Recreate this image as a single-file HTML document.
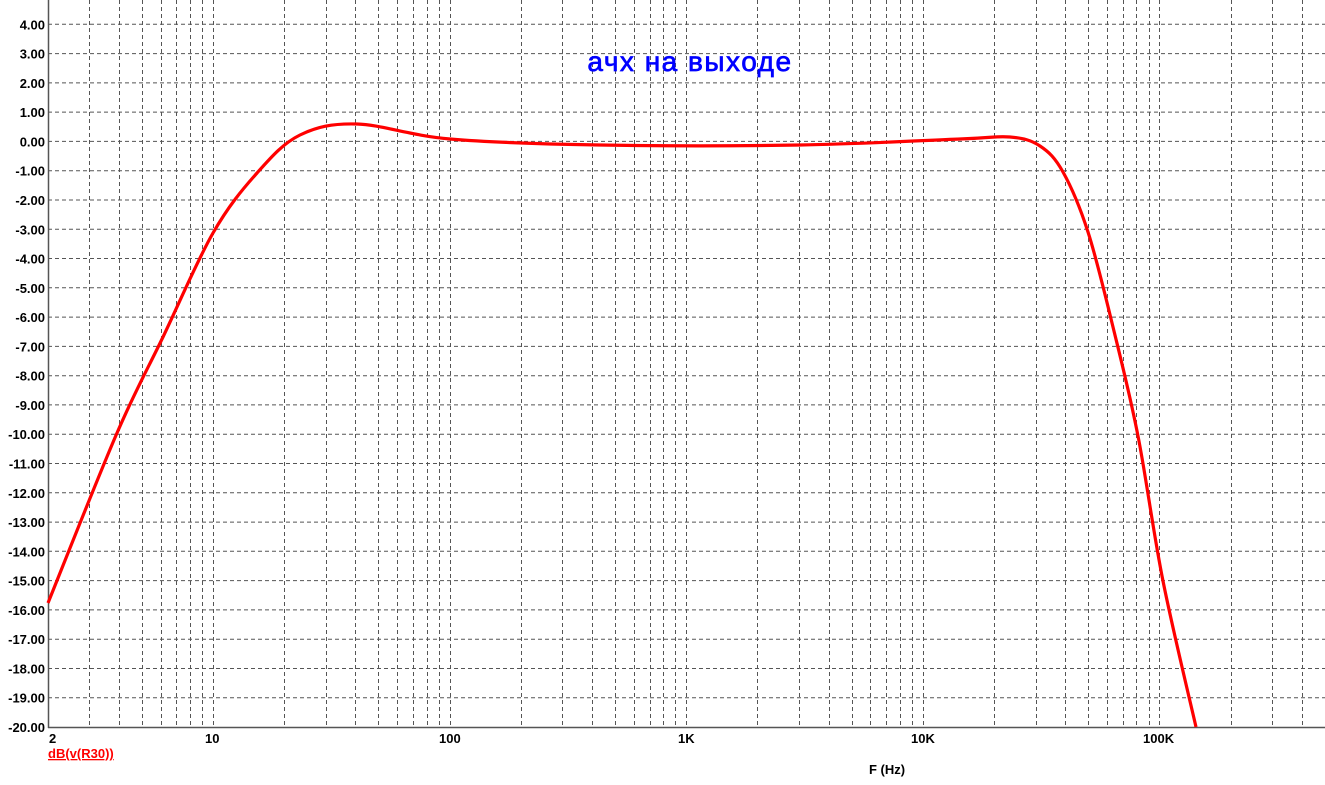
<!DOCTYPE html>
<html><head><meta charset="utf-8"><style>
html,body{margin:0;padding:0;background:#fff;width:1325px;height:785px;overflow:hidden}
svg{display:block}
text{font-family:"Liberation Sans",Arial,sans-serif;font-weight:bold}
</style></head><body>
<svg id="s" width="1325" height="785" xmlns="http://www.w3.org/2000/svg"></svg>
<script>
var s=document.getElementById('s'),h='';
var D=236.6,lx=function(f){return 213+(Math.log10(f)-1)*D;};
var Y=function(v){return 24.3+(4-v)*29.28;};
for(var v=4;v>=-19;v--){var y=Y(v).toFixed(1);h+='<line x1="48" y1="'+y+'" x2="1325" y2="'+y+'" stroke="#555" stroke-dasharray="4,3"/>';}
for(var e=0;e<=5;e++){for(var m=1;m<=9;m++){var f=m*Math.pow(10,e);if(f<=2)continue;var x=lx(f);if(x>1324)continue;x=Math.round(x)+0.5;h+='<line x1="'+x+'" y1="0" x2="'+x+'" y2="727" stroke="#555" stroke-dasharray="4,3"/>';}}
h+='<line x1="48.5" y1="0" x2="48.5" y2="728" stroke="#555" stroke-width="1.5"/>';
h+='<line x1="48" y1="727.5" x2="1325" y2="727.5" stroke="#555" stroke-width="1.5"/>';
for(var v=4;v>=-20;v--){h+='<text x="45" y="'+(Y(v)+5)+'" text-anchor="end" font-size="13" fill="#000">'+v.toFixed(2)+'</text>';}
var xl=[['2',49],['10',205],['100',439],['1K',678],['10K',911],['100K',1143]];
xl.forEach(function(a){h+='<text x="'+a[1]+'" y="743" font-size="13" fill="#000">'+a[0]+'</text>';});
h+='<text x="48" y="758" font-size="13" fill="#ff0000" text-decoration="underline">dB(v(R30))</text>';
h+='<text x="869" y="774" font-size="13" fill="#000">F (Hz)</text>';
h+='<text x="690" y="71" text-anchor="middle" font-size="28" letter-spacing="1.5" fill="#0000ff" style="font-weight:normal;stroke:#0000ff;stroke-width:0.7">ачх на выходе</text>';
var p=[[48,603],[117,433],[163,337],[213,233],[257,173],[300,135],[357,124],[450,139],[600,145],[800,145],[960,139],[1010,137],[1040,146],[1063,172],[1088,232],[1113,327],[1138,436],[1163,581],[1196,727]];
var d='M'+p[0][0]+','+p[0][1];
for(var i=0;i<p.length-1;i++){var p0=p[Math.max(0,i-1)],p1=p[i],p2=p[i+1],p3=p[Math.min(p.length-1,i+2)];
var c1x=p1[0]+(p2[0]-p0[0])/6,c1y=p1[1]+(p2[1]-p0[1])/6,c2x=p2[0]-(p3[0]-p1[0])/6,c2y=p2[1]-(p3[1]-p1[1])/6;
d+=' C'+c1x.toFixed(1)+','+c1y.toFixed(1)+' '+c2x.toFixed(1)+','+c2y.toFixed(1)+' '+p2[0]+','+p2[1];}
h+='<path d="'+d+'" fill="none" stroke="#ff0000" stroke-width="3.2"/>';
s.innerHTML=h;
</script>
</body></html>
